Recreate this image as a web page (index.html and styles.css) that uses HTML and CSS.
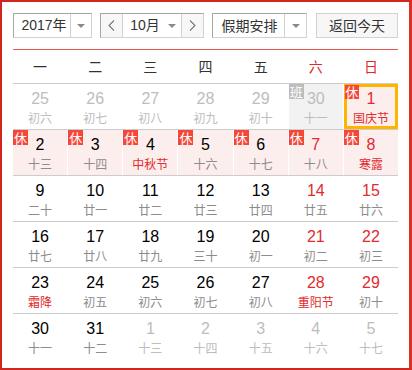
FILE: index.html
```html
<!DOCTYPE html>
<html lang="zh-CN">
<head>
<meta charset="utf-8">
<link rel="stylesheet" href="styles.css">
</head>
<body>
<div class="cal">
  <div class="toolbar">
    <div class="sel year">
      <span class="sel-text">2017年</span>
      <span class="sel-arrow"><i class="tri"></i></span>
    </div>
    <div class="sel month">
      <span class="nav"><svg width="7" height="11" viewBox="0 0 7 11"><polyline points="6,0.5 1,5.5 6,10.5" fill="none" stroke="#777" stroke-width="1.1"/></svg></span>
      <span class="sel-text mid">10月<i class="tri"></i></span>
      <span class="nav"><svg width="7" height="11" viewBox="0 0 7 11"><polyline points="1,0.5 6,5.5 1,10.5" fill="none" stroke="#777" stroke-width="1.1"/></svg></span>
    </div>
    <div class="sel holiday">
      <span class="sel-text">假期安排</span>
      <span class="sel-arrow"><i class="tri"></i></span>
    </div>
    <div class="today">返回今天</div>
  </div>

  <div class="weekdays">
    <span>一</span><span>二</span><span>三</span><span>四</span><span>五</span><span class="we">六</span><span class="we">日</span>
  </div>

  <div class="grid">
    <div class="row">
      <div class="cell other"><div class="num">25</div><div class="lunar">初六</div></div>
      <div class="cell other"><div class="num">26</div><div class="lunar">初七</div></div>
      <div class="cell other"><div class="num">27</div><div class="lunar">初八</div></div>
      <div class="cell other"><div class="num">28</div><div class="lunar">初九</div></div>
      <div class="cell other"><div class="num">29</div><div class="lunar">初十</div></div>
      <div class="cell other work"><span class="badge gray">班</span><div class="num">30</div><div class="lunar">十一</div></div>
      <div class="cell rest selected"><span class="badge">休</span><div class="num red">1</div><div class="lunar red">国庆节</div></div>
    </div>
    <div class="row">
      <div class="cell rest"><span class="badge">休</span><div class="num">2</div><div class="lunar">十三</div></div>
      <div class="cell rest"><span class="badge">休</span><div class="num">3</div><div class="lunar">十四</div></div>
      <div class="cell rest"><span class="badge">休</span><div class="num">4</div><div class="lunar red">中秋节</div></div>
      <div class="cell rest"><span class="badge">休</span><div class="num">5</div><div class="lunar">十六</div></div>
      <div class="cell rest"><span class="badge">休</span><div class="num">6</div><div class="lunar">十七</div></div>
      <div class="cell rest"><span class="badge">休</span><div class="num red">7</div><div class="lunar">十八</div></div>
      <div class="cell rest"><span class="badge">休</span><div class="num red">8</div><div class="lunar red">寒露</div></div>
    </div>
    <div class="row">
      <div class="cell"><div class="num">9</div><div class="lunar">二十</div></div>
      <div class="cell"><div class="num">10</div><div class="lunar">廿一</div></div>
      <div class="cell"><div class="num">11</div><div class="lunar">廿二</div></div>
      <div class="cell"><div class="num">12</div><div class="lunar">廿三</div></div>
      <div class="cell"><div class="num">13</div><div class="lunar">廿四</div></div>
      <div class="cell"><div class="num red">14</div><div class="lunar">廿五</div></div>
      <div class="cell"><div class="num red">15</div><div class="lunar">廿六</div></div>
    </div>
    <div class="row">
      <div class="cell"><div class="num">16</div><div class="lunar">廿七</div></div>
      <div class="cell"><div class="num">17</div><div class="lunar">廿八</div></div>
      <div class="cell"><div class="num">18</div><div class="lunar">廿九</div></div>
      <div class="cell"><div class="num">19</div><div class="lunar">三十</div></div>
      <div class="cell"><div class="num">20</div><div class="lunar">初一</div></div>
      <div class="cell"><div class="num red">21</div><div class="lunar">初二</div></div>
      <div class="cell"><div class="num red">22</div><div class="lunar">初三</div></div>
    </div>
    <div class="row">
      <div class="cell"><div class="num">23</div><div class="lunar red">霜降</div></div>
      <div class="cell"><div class="num">24</div><div class="lunar">初五</div></div>
      <div class="cell"><div class="num">25</div><div class="lunar">初六</div></div>
      <div class="cell"><div class="num">26</div><div class="lunar">初七</div></div>
      <div class="cell"><div class="num">27</div><div class="lunar">初八</div></div>
      <div class="cell"><div class="num red">28</div><div class="lunar red">重阳节</div></div>
      <div class="cell"><div class="num red">29</div><div class="lunar">初十</div></div>
    </div>
    <div class="row last">
      <div class="cell"><div class="num">30</div><div class="lunar">十一</div></div>
      <div class="cell"><div class="num">31</div><div class="lunar">十二</div></div>
      <div class="cell other"><div class="num">1</div><div class="lunar">十三</div></div>
      <div class="cell other"><div class="num">2</div><div class="lunar">十四</div></div>
      <div class="cell other"><div class="num">3</div><div class="lunar">十五</div></div>
      <div class="cell other"><div class="num">4</div><div class="lunar">十六</div></div>
      <div class="cell other"><div class="num">5</div><div class="lunar">十七</div></div>
    </div>
  </div>
</div>
</body>
</html>
```

FILE: styles.css
```css
html, body {
  margin: 0;
  padding: 0;
  background: #fff;
}

.cal {
  box-sizing: border-box;
  width: 412px;
  height: 370px;
  border: 2px solid #d0261d;
  border-right: 3px solid #dc2f1f;
  padding: 11px 11px 0 11px;
  font-family: "Liberation Sans", "Noto Sans CJK SC", sans-serif;
  background: #fff;
}

/* toolbar */
.toolbar {
  display: flex;
  height: 25px;
  font-size: 14px;
  color: #333;
}

.sel {
  box-sizing: border-box;
  display: flex;
  height: 25px;
  border: 1px solid #d2d2d2;
  border-top-color: #a6a6a6;
  border-left-color: #a6a6a6;
  background: #fff;
}

.sel-text {
  display: flex;
  align-items: center;
  justify-content: center;
  line-height: 23px;
}

.sel-arrow {
  display: flex;
  align-items: center;
  justify-content: center;
  border-left: 1px solid #d2d2d2;
}

.tri {
  display: block;
  width: 0;
  height: 0;
  border-left: 4px solid transparent;
  border-right: 4px solid transparent;
  border-top: 4px solid #8a8a8a;
}

.year {
  width: 79px;
}
.year .sel-text {
  width: 56px;
  padding-left: 4px;
  box-sizing: border-box;
}
.year .sel-arrow {
  flex: 1;
}

.month {
  width: 104px;
  margin-left: 8px;
}
.month .nav {
  width: 21px;
  display: flex;
  align-items: center;
  justify-content: center;
  background: #f7f7f7;
}
.month .nav:first-child {
  border-right: 1px solid #d2d2d2;
}
.month .nav:last-child {
  border-left: 1px solid #d2d2d2;
}
.month .mid {
  flex: 1;
  gap: 8px;
  padding-left: 2px;
}

.holiday {
  width: 95px;
  margin-left: 8px;
  font-family: "Noto Sans CJK SC", sans-serif;
}
.holiday .sel-text {
  width: 71px;
  padding-left: 2px;
  box-sizing: border-box;
}
.holiday .sel-arrow {
  flex: 1;
}

.today {
  box-sizing: border-box;
  width: 82px;
  height: 25px;
  margin-left: 9px;
  border: 1px solid #d2d2d2;
  background: #f7f7f7;
  font-family: "Noto Sans CJK SC", sans-serif;
  text-align: center;
  line-height: 23px;
}

/* weekday header */
.weekdays {
  margin-top: 11px;
  border-top: 1px solid #e8584f;
  border-bottom: 1px solid #cccccc;
  height: 33px;
  display: grid;
  grid-template-columns: repeat(7, 1fr);
  column-gap: 1px;
  font-family: "Noto Sans CJK SC", sans-serif;
  font-size: 14px;
  line-height: 33px;
  color: #333;
  text-align: center;
}
.weekdays .we {
  color: #e0282a;
}

/* grid */
.row {
  display: grid;
  grid-template-columns: repeat(7, 1fr);
  column-gap: 1px;
  height: 45px;
  border-bottom: 1px solid #cccccc;
}
.row.last {
  border-bottom: none;
}

.cell {
  position: relative;
  box-sizing: border-box;
  height: 45px;
  padding-top: 5px;
  text-align: center;
}

.num {
  font-family: "Liberation Sans", sans-serif;
  font-size: 16px;
  line-height: 20px;
  color: #000;
}

.lunar {
  font-family: "Noto Sans CJK SC", sans-serif;
  font-size: 12px;
  line-height: 18px;
  color: #8c8c8c;
}

.red {
  color: #e22b2d;
}

.other .num,
.other .lunar {
  color: #bdbdbd;
}

.rest {
  background: #fdeeee;
}

.work {
  background: #f2f2f2;
}

.selected {
  box-shadow: inset 0 0 0 3px #ffb400;
}

.badge {
  position: absolute;
  top: 0;
  left: 0;
  width: 15px;
  height: 15px;
  background: #f5463a;
  color: #fff;
  font-family: "Noto Sans CJK SC", sans-serif;
  font-size: 13px;
  line-height: 15px;
  text-align: center;
}
.badge.gray {
  background: #bdbdbd;
}
.selected .badge {
  top: 1px;
  left: 1px;
  width: 14px;
  height: 14px;
  line-height: 14px;
}
```
